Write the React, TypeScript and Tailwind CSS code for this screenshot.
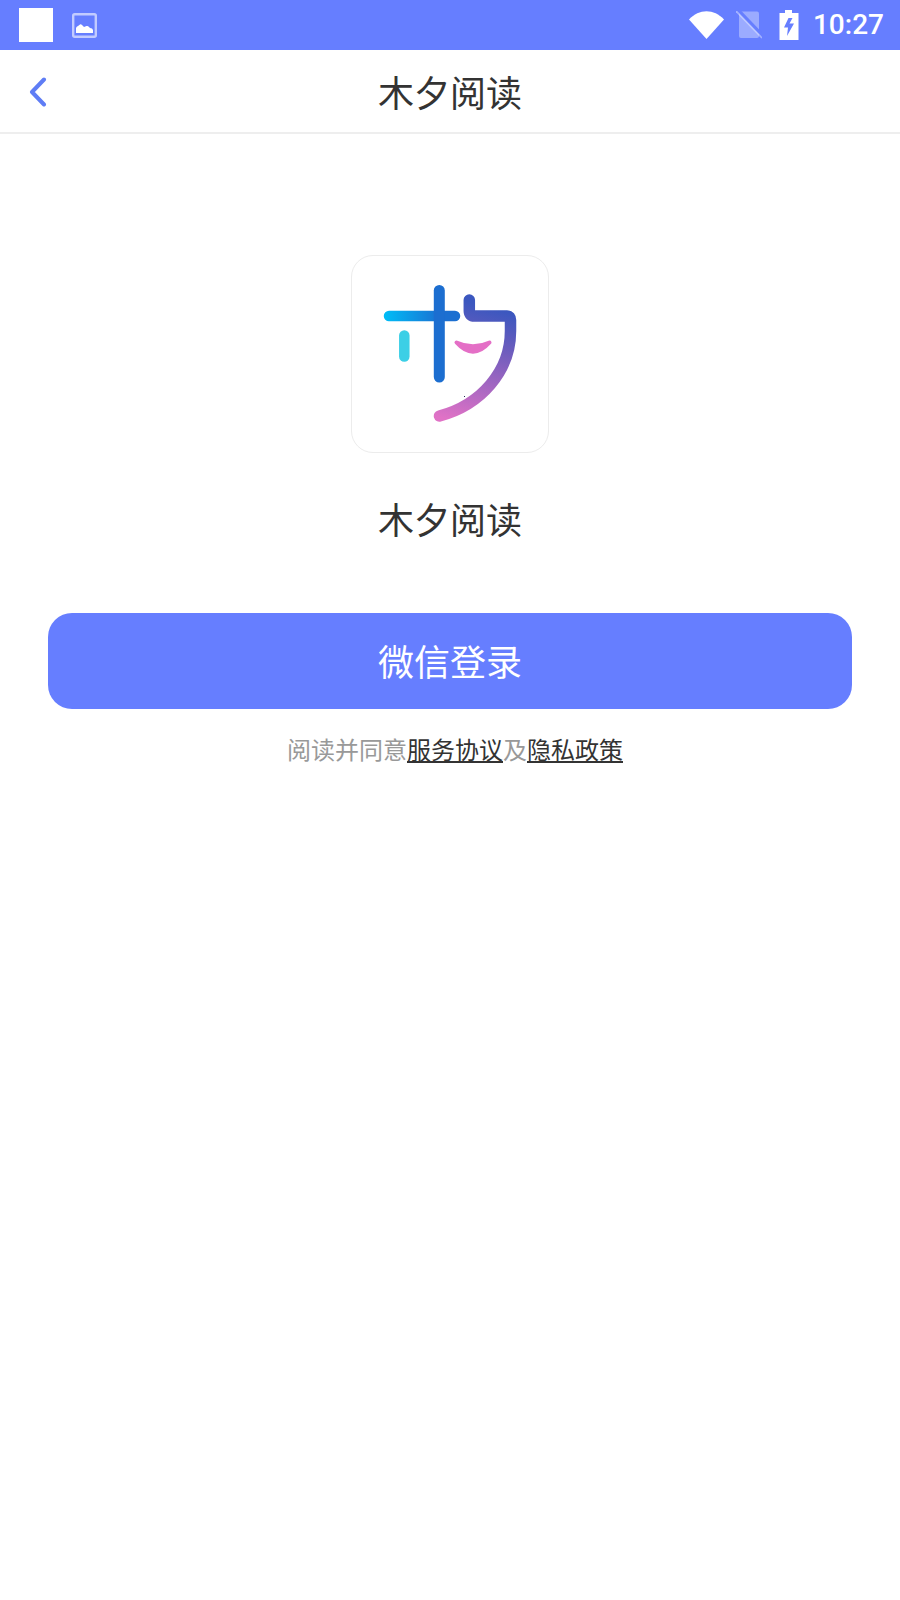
import React from "react";

const StatusBar: React.FC = () => (
    <div className="h-[50px] bg-[#667eff] flex items-center justify-between pl-[19px] pr-[16px]">
        <div className="flex items-center">
            <div className="w-[34px] h-[34px] bg-white" />
            <svg className="ml-[19px]" width="25" height="25" viewBox="0 0 25 25">
                <rect x="1.2" y="1.2" width="22.6" height="22.6" rx="1.5" fill="none" stroke="#fff" strokeOpacity="0.6" strokeWidth="2.4" />
                <path d="M4 20 V15 Q4.5 13.5 6 13 L8 11.5 Q9 11 10 12 L12 14 L14.5 13 Q16 12.5 17 14 L18 15 Q20.5 15 21 17 V20 Z" fill="#fff" />
            </svg>
        </div>
        <div className="flex items-center">
            <svg width="35" height="28" viewBox="0 0 35 28">
                <path d="M0 8.5 C10 -2.5 25 -2.5 35 8.5 L17.5 28 Z" fill="#fff" />
            </svg>
            <svg className="ml-[12px]" width="26" height="28" viewBox="0 0 26 28">
                <path d="M5 0.5 H21 Q23 0.5 23 2.5 V25 Q23 27 21 27 H5 Q3 27 3 25 V2.5 Q3 0.5 5 0.5 Z" fill="#fff" fillOpacity="0.35" />
                <path d="M2 -1 L27 25" stroke="#667eff" strokeWidth="3.5" />
                <path d="M0 0 L26 27" stroke="#fff" strokeOpacity="0.4" strokeWidth="1.8" />
            </svg>
            <svg className="ml-[17px]" width="20" height="30" viewBox="0 0 20 30">
                <path d="M6 0 H13 V3 H19.5 V30 H0.5 V3 H6 Z" fill="#fff" />
                <path d="M9.5 8 L5 17.5 H9 L8 26 L15 13.5 H10.5 L13.5 8 Z" fill="#667eff" />
            </svg>
            <span className="ml-[14px] text-[28px] leading-[50px] text-white font-medium font-['Roboto',sans-serif]">10:27</span>
        </div>
    </div>
);

const NavBar: React.FC = () => (
    <div className="relative h-[84px] border-b-2 border-[#eeeeee] flex items-center justify-center">
        <button className="absolute left-[29px] top-[27px]">
            <svg className="block" width="18" height="30" viewBox="0 0 18 30">
                <path d="M15 2.5 L3 15 L15 27.5" fill="none" stroke="#5f7df5" strokeWidth="4" strokeLinecap="round" strokeLinejoin="round" />
            </svg>
        </button>
        <h1 className="text-[36px] leading-[50px] text-[#333333] font-normal">木夕阅读</h1>
    </div>
);

const Logo: React.FC = () => (
    <div className="w-[198px] h-[198px] rounded-[22px] border border-[#ececec] bg-white">
        <svg className="block" width="196" height="196" viewBox="1 1 196 196" fill="none">
            <defs>
                <linearGradient id="bar" gradientUnits="userSpaceOnUse" x1="33" y1="0" x2="90" y2="0">
                    <stop offset="0" stopColor="#00bdf7" />
                    <stop offset="1" stopColor="#1b6fd1" />
                </linearGradient>
                <linearGradient id="curve" gradientUnits="userSpaceOnUse" x1="130" y1="50" x2="100" y2="165">
                    <stop offset="0" stopColor="#3b57bf" />
                    <stop offset="0.3" stopColor="#6a5cbd" />
                    <stop offset="1" stopColor="#e072c6" />
                </linearGradient>
            </defs>
            <path d="M38 61 H104" stroke="url(#bar)" strokeWidth="10.5" strokeLinecap="round" />
            <path d="M88.3 35.5 V122" stroke="#1c6ed0" strokeWidth="11" strokeLinecap="round" />
            <path d="M53.3 80.5 V101.5" stroke="#3ccfe6" strokeWidth="10.5" strokeLinecap="round" />
            <path d="M105.5 87.5 Q122 95 138.5 87.5 Q122 106 105.5 87.5 Z" fill="#e46fc6" stroke="#e46fc6" strokeWidth="4" strokeLinejoin="round" />
            <path d="M118.3 45 V56 Q118.3 61 123.5 61 H156 Q159.5 61 159.5 65 V76 C159.5 116 130 150 88.5 161" stroke="url(#curve)" strokeWidth="11.5" strokeLinecap="round" strokeLinejoin="round" />
            <rect x="113" y="141" width="1" height="1" fill="#1f2a55" />
        </svg>
    </div>
);

export default function App() {
    return (
        <div className="min-h-[1600px] bg-white font-['Noto_Sans_CJK_SC','Noto_Sans',sans-serif]">
            <StatusBar />
            <NavBar />
            <main className="flex flex-col items-center pt-[121px] px-[48px]">
                <Logo />
                <div className="mt-[39px] text-[36px] leading-[52px] text-[#333333]">木夕阅读</div>
                <button className="mt-[69px] w-full h-[96px] pb-[2px] rounded-[24px] bg-[#667eff] text-white text-[36px]">
                    微信登录
                </button>
                <p className="mt-[23px] ml-[10px] text-[24px] leading-[34px] text-[#999999]">
                    阅读并同意
                    <a className="text-[#333333] underline" href="#terms">服务协议</a>
                    及
                    <a className="text-[#333333] underline" href="#privacy">隐私政策</a>
                </p>
            </main>
        </div>
    );
}
